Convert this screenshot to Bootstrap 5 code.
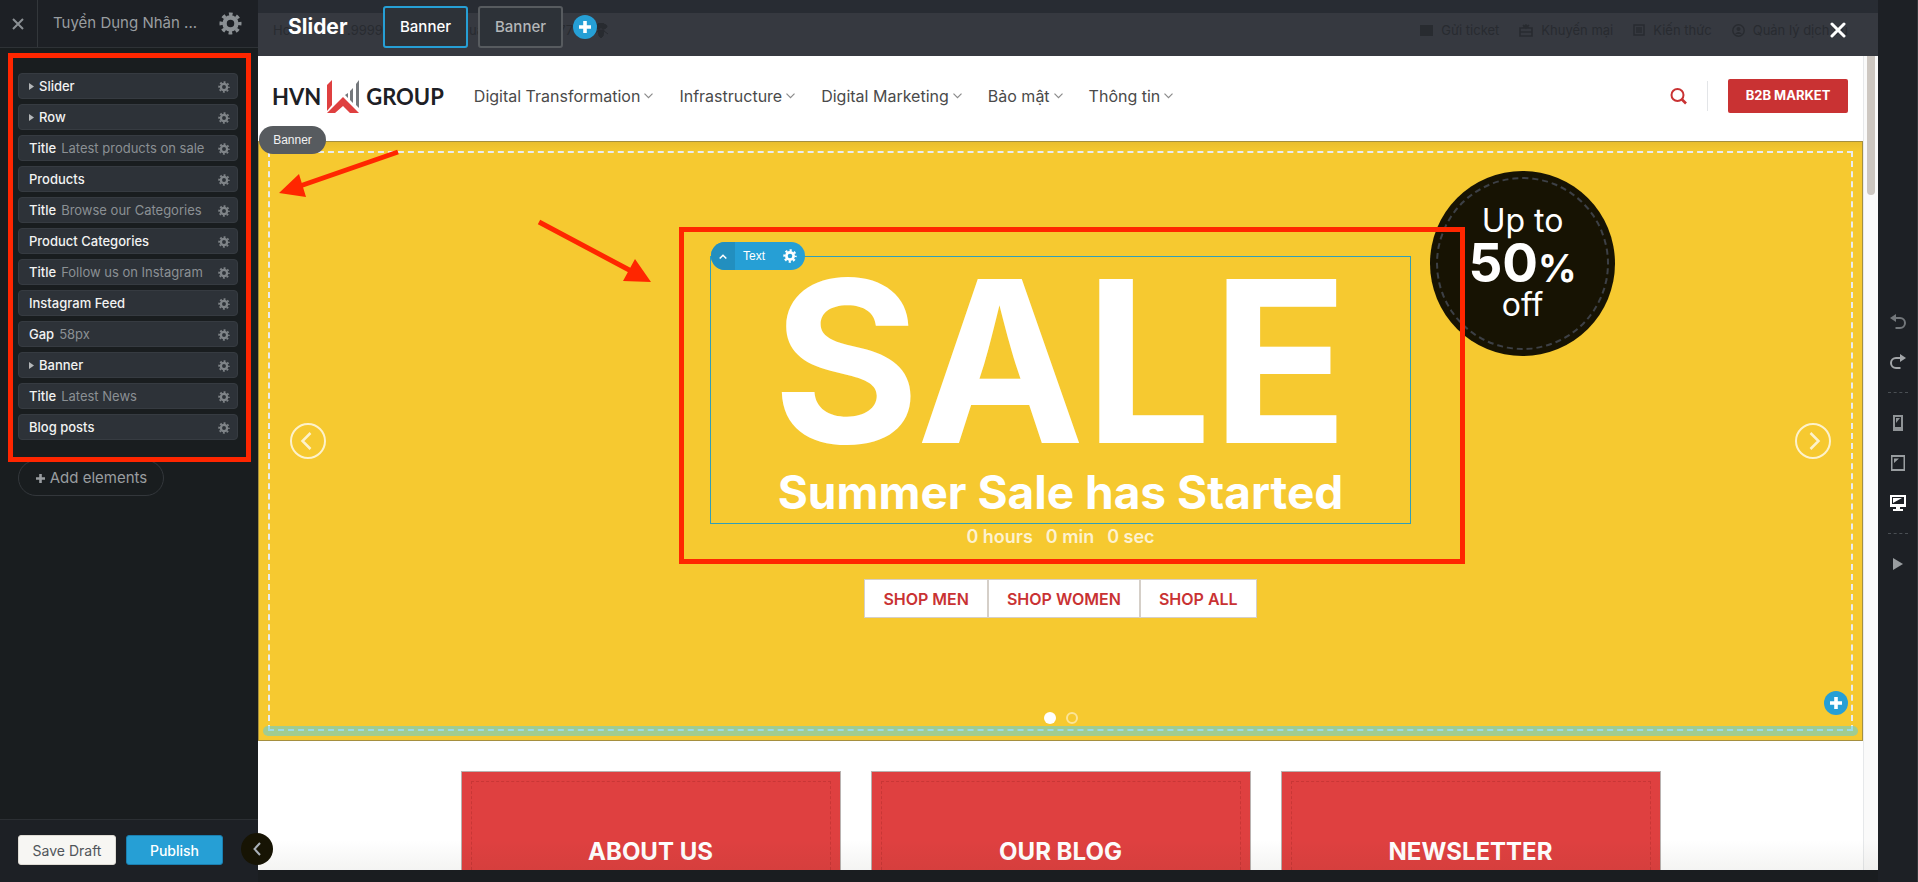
<!DOCTYPE html>
<html lang="vi">
<head>
<meta charset="utf-8">
<meta name="viewport" content="width=device-width, initial-scale=1">
<title>UX Builder</title>
<link href="https://cdn.jsdelivr.net/npm/bootstrap@5.3.0/dist/css/bootstrap.min.css" rel="stylesheet">
<style>
:root { --ui: Inter, "Noto Sans", sans-serif; --blue: #269fd5; --mark-red: #ff2600; }
body { font-family: var(--ui); background: #1a1d20; overflow: hidden; }
svg { display: block; flex: none; }
a { text-decoration: none; }
button { font-family: inherit; }
.bare { background: none; border: 0; padding: 0; color: inherit; }

/* sidebar */
.side { width: 258px; background: #191d1f; position: relative; z-index: 5; }
.side-head { height: 48px; background: #1d2025; border-bottom: 1px solid #2e3236; color: #8b9094; }
.side-head .close-btn { width: 38px; height: 47px; border-right: 1px solid #33373b; padding-right: 2px; }
.side-title { font-size: 15px; color: #999da0; padding-left: 15px; }
.tree { margin: 25px 20px 0 18px; position: relative; }
.tree-list { gap: 5px; }
.tree-item { height: 26px; border: 1px solid #363b41; border-radius: 4px; background: #2d3238; padding: 1px 7px 0 10px; font-size: 13px; line-height: 23px; color: #f2f2f2; font-weight: 500; }
.tree-item .note { color: #8b9094; font-weight: 400; margin-left: 5px; }
.tree-item svg { color: #7f8488; }
.add-el { margin: 20px 0 0 18px; width: 146px; height: 36px; border: 1px solid #33373b; border-radius: 18px; color: #999da0; font-size: 15px; }
.side-foot { height: 63px; background: #1d2025; border-top: 1px solid #2b2f33; padding: 15px 18px; gap: 10px; }
.side-foot button { height: 30px; font-size: 14px; border-radius: 3px; padding: 0; border: 1px solid; }
.side-foot .save-btn { width: 98px; background: #f7f6f3; border-color: #dedbd4; color: #50555a; }
.side-foot .pub-btn { width: 97px; background: var(--blue); border-color: #1a7fb0; color: #fff; font-weight: 500; }
.collapse-btn { position: absolute; right: -15px; bottom: 17px; width: 32px; height: 32px; border-radius: 50%; background: #171404; color: #a9b0b8; }
.frame-red { position: absolute; border: 5px solid var(--mark-red); pointer-events: none; z-index: 4; }
.tree .frame-red { inset: -20px -13px -22px -10px; }

/* stage */
.stage { min-width: 0; padding-bottom: 12px; }
.preview { background: #fff; overflow: hidden; position: relative; height: 100%; }
.preview::after { content: ""; position: absolute; inset: auto 0 0 0; height: 30px; background: linear-gradient(transparent, rgba(40,40,10,.05)); }
.topbar { height: 56px; background: linear-gradient(#282c33 13px, #363940 13px); position: relative; padding-left: 30px; }
.ghost { position: absolute; inset: 19px 30px auto 15px; height: 22px; font-size: 13px; color: #282b30; line-height: 22px; }
.ghost-links { gap: 20px; }
.tabs-row { gap: 10px; padding-top: 5px; position: relative; }
.slider-name { font-size: 21px; font-weight: 700; color: #fff; width: 85px; line-height: 44px; }
.tab-btn { width: 85px; height: 42px; border: 2px solid #575b5f; border-radius: 3px; background: #2d3238; color: #b4b7b9; font-size: 15px; font-weight: 500; padding: 0; }
.tab-btn.on { border-color: var(--blue); color: #fff; }
.plus-btn { width: 24px; height: 24px; border-radius: 50%; background: var(--blue); color: #fff; }
.top-x { position: absolute; right: 32px; top: 22px; }
.site { margin-right: 15px; }
.scroll-track { width: 15px; background: #fafafa; border-left: 1px solid #e6e8ea; position: absolute; right: 0; top: 56px; bottom: 0; padding: 0 3px; }
.scroll-thumb { height: 139px; background: #cdc7c1; border-radius: 0 0 4px 4px; }
.site-head { height: 85px; padding: 0 15px 5px 14px; }
.brand { font-family: Lato, sans-serif; font-weight: 700; font-size: 22px; color: #1d2025; gap: 6px; }
.menu { gap: 26px; margin-left: 30px; font-size: 16px; }
.menu a { color: #4a4a4a; gap: 4px; }
.menu svg { color: #8b8b8b; }
.split { width: 1px; height: 30px; background: #e3e5e8; margin: 0 20px; }
.b2b { width: 120px; height: 34px; background: #c93233; color: #fff; font-size: 13px; font-weight: 700; border: 0; border-radius: 2px; padding: 0; }

/* banner */
.hero { background: linear-gradient(#e9be2e, #f6c930 10px); border: 1px solid #a58f3f; height: 600px; position: relative; padding-top: 114px; }
.hero-dash { position: absolute; inset: 9px; border: 2px dashed #e9ecef; pointer-events: none; }
.pill { font-family: "Liberation Sans", sans-serif; font-size: 12px; height: 28px; border-radius: 14px; color: #fff; position: absolute; z-index: 3; }
.pill-banner { left: 0; top: -16px; width: 67px; background: #575b5f; color: #f2f2f2; }
.pill-text { left: 0; top: -15px; background: var(--blue); width: 94px; overflow: hidden; }
.pill-text .up { width: 24px; height: 28px; background: #228fbf; }
.hero-box { width: 701px; margin: 0 auto; position: relative; }
.hero-box .frame-red { inset: -29px -54px -15px -31px; }
.text-box { border: 1px solid #329fb8; height: 268px; color: #fff; position: relative; }
.text-box h1 { font-size: 225px; line-height: 208px; font-weight: 700; margin: 0; }
.text-box h2 { font-size: 46px; line-height: 54px; font-weight: 700; margin: 0; white-space: nowrap; }
.count { color: #fdf2d0; font-size: 18px; line-height: 25px; font-weight: 600; gap: 13px; }
.shop { margin-top: 30px; }
.shop button { height: 39px; background: #fff; border: 1px solid #d5cfc8; color: #c93233; font-weight: 600; font-size: 16px; padding: 0 18px; }
.off-badge { position: absolute; right: 247px; top: 29px; width: 185px; height: 185px; border-radius: 50%; background: #171303; color: #fff; padding: 6px; }
.off-ring { border: 2px dashed #3d4046; border-radius: 50%; height: 100%; font-size: 32px; padding-top: 21px; line-height: 42px; }
.off-ring strong { font-size: 53px; line-height: 42px; height: 42px; display: block; }
.off-ring strong small { font-size: 38px; line-height: 1; }
.arrow-btn { position: absolute; top: 281px; color: rgba(255,255,255,.75); }
.arrow-prev { left: 31px; }
.arrow-next { right: 31px; }
.dots { position: absolute; left: 0; right: 0; bottom: 16px; gap: 10px; }
.dot-on { width: 12px; height: 12px; border-radius: 50%; background: #fff; }
.dot-off { width: 12px; height: 12px; border-radius: 50%; border: 2px solid rgba(255,255,255,.5); }
.drop-line { position: absolute; left: 4px; right: 4px; bottom: 4px; height: 10px; border-radius: 5px; background: rgba(90,205,225,.55); }
.hero .plus-btn { position: absolute; right: 14px; bottom: 25px; }
.arrows { position: absolute; left: 0; top: 0; z-index: 4; pointer-events: none; }

/* tiles */
.tiles { max-width: 1200px; margin: 30px auto 0; gap: 30px; }
.tile { flex: 1 1 0; height: 160px; background: #df4040; border: 1px solid #b9b2b0; padding: 9px; }
.tile h3 { border: 1px dashed #c83636; height: 180px; font-size: 24px; line-height: 140px; font-weight: 700; color: #fff; margin: 0; text-align: center; }

/* rail */
.rail { width: 40px; background: #1d2025; border-right: 1px solid #33373b; padding-top: 3px; }
.rail button { width: 39px; height: 40px; }
.rail hr { width: 20px; margin: 10px 0; border: 0; border-top: 1px dashed #4a4f54; opacity: 1; }
</style>
</head>
<body>
<svg width="0" height="0" class="position-absolute" aria-hidden="true">
  <symbol id="gear" viewBox="0 0 24 24"><g fill="none" stroke="currentColor"><circle cx="12" cy="12" r="6.2" stroke-width="4.6"/><circle cx="12" cy="12" r="9.7" stroke-width="3.6" stroke-dasharray="3.8 3.818" stroke-dashoffset="1.9"/></g></symbol>
  <symbol id="plus" viewBox="0 0 24 24"><path d="M12 6v12M6 12h12" stroke="currentColor" stroke-width="3.6" fill="none"/></symbol>
  <symbol id="down" viewBox="0 0 9 6"><path d="M.5 .7l4 4 4-4" fill="none" stroke="currentColor" stroke-width="1.2"/></symbol>
</svg>
<div class="d-flex vh-100">
  <aside class="side d-flex flex-column flex-shrink-0">
    <header class="side-head d-flex align-items-center flex-shrink-0">
      <button class="bare close-btn d-flex align-items-center justify-content-center" aria-label="Close"><svg width="12" height="12" viewBox="0 0 12 12"><path d="M1 1l10 10M11 1L1 11" stroke="currentColor" stroke-width="2"/></svg></button>
      <span class="side-title flex-fill">Tuyển Dụng Nhân ...</span>
      <button class="bare me-3" aria-label="Settings"><svg width="23" height="23"><use href="#gear"/></svg></button>
    </header>
    <div class="tree">
      <div id="tree" class="tree-list d-grid"></div>
      <div class="frame-red"></div>
    </div>
    <button class="bare add-el d-flex align-items-center justify-content-center gap-1"><svg width="11" height="11" viewBox="0 0 11 11"><path d="M5.5 1v9M1 5.5h9" stroke="currentColor" stroke-width="2.6"/></svg>Add elements</button>
    <footer class="side-foot d-flex mt-auto flex-shrink-0">
      <button class="save-btn">Save Draft</button>
      <button class="pub-btn">Publish</button>
    </footer>
    <button class="bare collapse-btn d-flex align-items-center justify-content-center" aria-label="Collapse"><svg width="8" height="14" viewBox="0 0 8 14"><path d="M7 1L1.5 7 7 13" fill="none" stroke="currentColor" stroke-width="2"/></svg></button>
  </aside>

  <main class="stage flex-fill">
    <div class="preview">
      <div class="topbar">
        <div class="ghost d-flex align-items-center">
          <span style="width:74px">Ho</span><span style="width:122px">.9999</span><span style="width:78px">uật</span><span style="width:46px">.777</span>
          <svg width="16" height="16" viewBox="0 0 16 16"><path d="M8 4C5 0 0 4 3 6s5 1 5-2c3-4 8 0 5 2s-5 1-5-2M5 8h6l-1 6-2 2-2-2zM5 1l3 3 3-3M1 12l4-3M15 12l-4-3" fill="currentColor" stroke="currentColor"/></svg>
          <div class="ghost-links d-flex ms-auto">
            <span class="d-flex align-items-center gap-2"><svg width="13" height="11" viewBox="0 0 13 11"><path d="M0 0h13v11H0z" fill="currentColor"/></svg>Gửi ticket</span>
            <span class="d-flex align-items-center gap-2"><svg width="14" height="13" viewBox="0 0 14 13"><path d="M1 4h12v8H1zM1 8h12M4 4l3-3 3 3M4 1l3 3 3-3" fill="none" stroke="currentColor" stroke-width="1.6"/></svg>Khuyến mại</span>
            <span class="d-flex align-items-center gap-2"><svg width="12" height="12" viewBox="0 0 12 12"><path d="M1 1h10v10H1zM3 4h6M3 6h6M3 8h6" fill="none" stroke="currentColor" stroke-width="1.5"/></svg>Kiến thức</span>
            <span class="d-flex align-items-center gap-2"><svg width="13" height="13" viewBox="0 0 13 13"><circle cx="6.5" cy="6.5" r="5.7" fill="none" stroke="currentColor" stroke-width="1.4"/><circle cx="6.5" cy="5" r="2" fill="currentColor"/><path d="M3 10q3.500-4 7 0z" fill="currentColor"/></svg>Quản lý dịch vụ</span>
          </div>
        </div>
        <div class="tabs-row d-flex align-items-center">
          <span class="slider-name">Slider</span>
          <button class="tab-btn on">Banner</button>
          <button class="tab-btn">Banner</button>
          <button class="bare plus-btn" aria-label="Add"><svg width="24" height="24"><use href="#plus"/></svg></button>
          <button class="bare top-x" aria-label="Close slider"><svg width="16" height="16" viewBox="0 0 16 16"><path d="M2 2l12 12M14 2L2 14" stroke="#fff" stroke-width="3" stroke-linecap="round"/></svg></button>
        </div>
      </div>

      <div class="site">
        <header class="site-head d-flex align-items-center">
          <a href="#" class="brand d-flex align-items-center"><span>HVN</span>
            <svg width="33" height="33" viewBox="0 0 33 33"><path d="M0 5L5 0v25l-5 6z" fill="#df4040"/><path d="M0 33l16-16 16 16h-9l-7-7-8 7z" fill="#df4040"/><path d="M32 0v28l-3-3V4zM26 8v15l-3-3v-9zM21 13v5l-3-3z" fill="#74787c"/></svg>
            <span>GROUP</span></a>
          <nav class="menu d-flex" id="menu"></nav>
          <button class="bare ms-auto" aria-label="Search"><svg width="17" height="17" viewBox="0 0 17 17"><circle cx="7.5" cy="7" r="6" fill="none" stroke="#c93233" stroke-width="2"/><path d="M11.5 11l4.5 4.5" stroke="#c93233" stroke-width="2.6"/></svg></button>
          <span class="split"></span>
          <button class="b2b">B2B MARKET</button>
        </header>

        <section class="hero">
          <div class="hero-dash"></div>
          <div class="pill pill-banner d-flex align-items-center justify-content-center">Banner</div>
          <div class="off-badge"><div class="off-ring text-center">Up to<strong>50<small>%</small></strong>off</div></div>
          <div class="hero-box text-center">
            <div class="text-box">
              <div class="pill pill-text d-flex align-items-center">
                <span class="up d-flex align-items-center justify-content-center"><svg width="8" height="5" viewBox="0 0 8 5"><path d="M.7 4.500L4 1.200l3.300 3.300" fill="none" stroke="#fff" stroke-width="1.500"/></svg></span>
                <span class="ps-2">Text</span>
                <svg class="ms-auto me-2" width="14" height="14"><use href="#gear"/></svg>
              </div>
              <h1>SALE</h1>
              <h2>Summer Sale has Started</h2>
            </div>
            <div class="count d-flex justify-content-center"><span>0 hours</span><span>0 min</span><span>0 sec</span></div>
            <div class="frame-red"></div>
          </div>
          <div class="shop d-flex justify-content-center"><button>SHOP MEN</button><button>SHOP WOMEN</button><button>SHOP ALL</button></div>
          <button class="bare arrow-btn arrow-prev" aria-label="Previous"><svg width="36" height="36" viewBox="0 0 36 36" fill="none" stroke="currentColor" stroke-width="2"><circle cx="18" cy="18" r="17"/><path d="M20.500 10L12.500 18l8 8" stroke-width="2.500"/></svg></button>
          <button class="bare arrow-btn arrow-next" aria-label="Next"><svg width="36" height="36" viewBox="0 0 36 36" fill="none" stroke="currentColor" stroke-width="2"><circle cx="18" cy="18" r="17"/><path d="M15.500 10l8 8-8 8" stroke-width="2.500"/></svg></button>
          <div class="dots d-flex align-items-center justify-content-center"><span class="dot-on"></span><span class="dot-off"></span></div>
          <div class="drop-line"></div>
          <button class="bare plus-btn" aria-label="Add"><svg width="24" height="24"><use href="#plus"/></svg></button>
          <svg class="arrows" width="400" height="160" viewBox="259 142 400 160"><g stroke="#ff2600" fill="#ff2600"><path d="M398 152L300 186M539 222l94 50" stroke-width="5"/><path d="M279 193l20-19 7 23zM651 282l-16-23-12 22z" stroke="none"/></g></svg>
        </section>

        <section class="tiles d-flex"><a href="#" class="tile"><h3>ABOUT US</h3></a><a href="#" class="tile"><h3>OUR BLOG</h3></a><a href="#" class="tile"><h3>NEWSLETTER</h3></a></section>
      </div>
      <div class="scroll-track"><div class="scroll-thumb"></div></div>
    </div>
  </main>

  <aside class="rail d-flex flex-column align-items-center justify-content-center flex-shrink-0" id="rail"></aside>
</div>
<script>
const items = [['Slider', '', 1], ['Row', '', 1], ['Title', 'Latest products on sale'], ['Products'], ['Title', 'Browse our Categories'], ['Product Categories'], ['Title', 'Follow us on Instagram'], ['Instagram Feed'], ['Gap', '58px'], ['Banner', '', 1], ['Title', 'Latest News'], ['Blog posts']];
document.getElementById('tree').innerHTML = items.map(([name, note, open]) =>
  `<div class="tree-item d-flex align-items-center">${open ? '<svg class="me-1" width="6" height="7" viewBox="0 0 6 7"><path d="M0 0l5 3.500L0 7z" fill="#b4b7b9"/></svg>' : ''}<span>${name}</span>${note ? `<span class="note">${note}</span>` : ''}<svg class="ms-auto" width="12" height="12"><use href="#gear"/></svg></div>`).join('');
document.getElementById('menu').innerHTML = ['Digital Transformation', 'Infrastructure', 'Digital Marketing', 'Bảo mật', 'Thông tin'].map(t =>
  `<a href="#" class="d-flex align-items-center">${t}<svg width="9" height="6"><use href="#down"/></svg></a>`).join('');
/* label, colour, filled shape, stroked shape */
const rail = [
  ['Undo', '#73777b', 'M0 4l6-4v8z', 'M5 4h5a4.500 4.500 0 0 1 0 10H5.500'],
  ['Redo', '#a2a5a8', 'M16 4l-6-4v8z', 'M11 4H6a4.500 4.500 0 0 0 0 10h4.500'],
  null,
  ['Mobile', '#8f9396', 'M3 0h10v16H3zm2 2v10h6V2zM6 3h4L6 8z'],
  ['Tablet', '#999da0', 'M1 0h14v16H1zm1.500 2v12h11V2zM4 3.500h5L4 8z'],
  ['Desktop', '#fff', 'M0 0h16v12h-6v2h3v2H3v-2h3v-2H0zm2 2v7h12V2zM3 3h9L3 8z'],
  null,
  ['Play', '#999da0', 'M3 2l10 6-10 6z']];
document.getElementById('rail').innerHTML = rail.map(r => !r ? '<hr>' :
  `<button class="bare d-flex align-items-center justify-content-center" aria-label="${r[0]}"><svg width="16" height="16" viewBox="0 0 16 16" color="${r[1]}"><path fill="currentColor" fill-rule="evenodd" d="${r[2]}"/>${r[3] ? `<path fill="none" stroke="currentColor" stroke-width="2" d="${r[3]}"/>` : ''}</svg></button>`).join('');
</script>
<script src="https://cdn.jsdelivr.net/npm/bootstrap@5.3.0/dist/js/bootstrap.bundle.min.js"></script>
</body>
</html>
